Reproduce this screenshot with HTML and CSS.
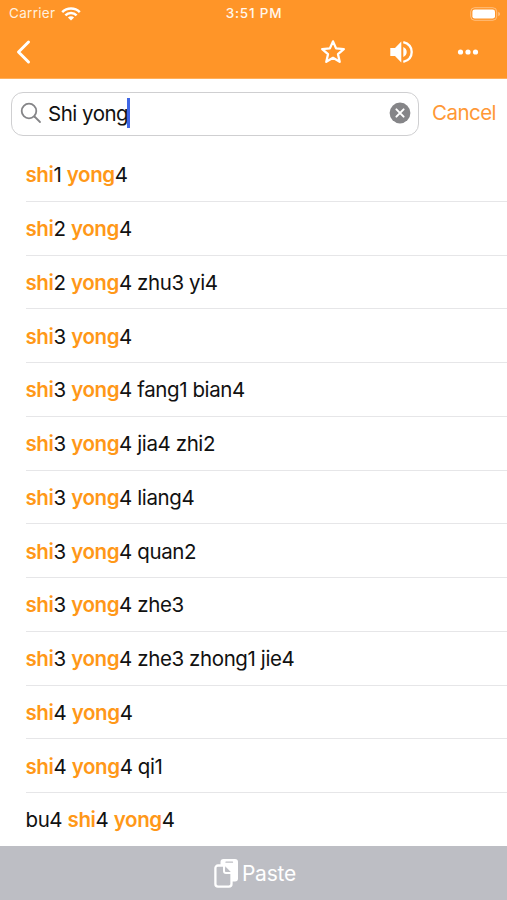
FILE: index.html
```html
<!DOCTYPE html>
<html lang="en">
<head>
<meta charset="utf-8">
<title>Search</title>
<link rel="stylesheet" href="styles.css">
</head>
<body>
<div class="app">
  <header class="header">
    <div class="status">
      <div class="carrier"><span>Carrier</span>
        <svg width="20" height="14" viewBox="0 0 20 14" fill="none" stroke="#fff" stroke-width="2.5"><path d="M1.2 5.2a12.4 12.4 0 0 1 17.6 0M4.4 8.3a7.9 7.9 0 0 1 11.2 0"/><path d="M10 13.6 6.9 10.5a4.4 4.4 0 0 1 6.2 0z" fill="#fff" stroke="none"/></svg>
      </div>
      <div class="time">3:51 PM</div>
      <svg class="battery" width="31" height="14" viewBox="0 0 31 14"><rect x=".7" y=".7" width="26" height="12.6" rx="4" fill="none" stroke="#fff" stroke-opacity=".4"/><rect x="2.4" y="2.4" width="22.6" height="9.2" rx="2.4" fill="#fff"/><path d="M28.3 4.8v4.4q1.7-.7 1.7-2.2t-1.7-2.2" fill="#fff" fill-opacity=".45"/></svg>
    </div>
    <div class="toolbar">
      <svg class="back" width="17" height="26" viewBox="0 0 17 26" fill="none" stroke="#fff" stroke-width="3" stroke-linecap="round" stroke-linejoin="round"><path d="M13.5 3 3.5 13l10 10"/></svg>
      <div class="actions">
        <svg width="26" height="26" viewBox="0 0 26 26" fill="none" stroke="#fff" stroke-width="2.3" stroke-linejoin="round"><path d="m13 2.4 3.1 7 7.7.7-5.8 5.1 1.7 7.6-6.7-4-6.7 4L8 15.2l-5.8-5.1 7.7-.7z"/></svg>
        <svg width="26" height="26" viewBox="0 0 26 26" fill="#fff"><path d="M2.3 9H7l6.300-6.500v21L7 17H2.300z"/><path d="M15.300 8q3.400 1.700 3.400 5T15.300 18z"/><path d="M15.300 3.100q8.400 2.200 8.400 9.900t-8.400 9.900" fill="none" stroke="#fff" stroke-width="2.300"/></svg>
        <svg width="26" height="26" viewBox="0 0 26 26" fill="#fff"><circle cx="5.5" cy="13" r="2.6"/><circle cx="13" cy="13" r="2.6"/><circle cx="20.5" cy="13" r="2.6"/></svg>
      </div>
    </div>
  </header>
  <div class="searchbar">
    <div class="field">
      <svg width="22" height="22" viewBox="0 0 22 22" fill="none" stroke="#858588" stroke-width="1.8" stroke-linecap="round"><circle cx="9" cy="9" r="7.3"/><path d="m14.5 14.5 5.5 5.5"/></svg>
      <span class="query">Shi yong</span><span class="caret"></span>
      <svg class="clear" width="22" height="22" viewBox="0 0 22 22"><circle cx="11" cy="11" r="10.4" fill="#858588"/><path d="m7.4 7.4 7.2 7.2m0-7.2-7.2 7.2" stroke="#fff" stroke-width="2" stroke-linecap="round"/></svg>
    </div>
    <span class="cancel">Cancel</span>
  </div>
  <ul class="list">
    <li><p><b>shi</b>1 <b>yong</b>4</p></li>
    <li><p><b>shi</b>2 <b>yong</b>4</p></li>
    <li><p><b>shi</b>2 <b>yong</b>4 zhu3 yi4</p></li>
    <li><p><b>shi</b>3 <b>yong</b>4</p></li>
    <li><p><b>shi</b>3 <b>yong</b>4 fang1 bian4</p></li>
    <li><p><b>shi</b>3 <b>yong</b>4 jia4 zhi2</p></li>
    <li><p><b>shi</b>3 <b>yong</b>4 liang4</p></li>
    <li><p><b>shi</b>3 <b>yong</b>4 quan2</p></li>
    <li><p><b>shi</b>3 <b>yong</b>4 zhe3</p></li>
    <li><p><b>shi</b>3 <b>yong</b>4 zhe3 zhong1 jie4</p></li>
    <li><p><b>shi</b>4 <b>yong</b>4</p></li>
    <li><p><b>shi</b>4 <b>yong</b>4 qi1</p></li>
    <li><p>bu4 <b>shi</b>4 <b>yong</b>4</p></li>
  </ul>
  <footer class="paste">
    <svg width="25" height="30" viewBox="0 0 25 30"><rect x="6.5" y="1" width="17.5" height="22.5" rx="3" fill="#fff"/><path d="M12 4.2h6.5" stroke="#bdbec4" stroke-width="1.3" stroke-linecap="round"/><path d="M4 7.5h6.500l7 7V26a2.600 2.600 0 0 1-2.600 2.600H4A2.600 2.600 0 0 1 1.400 26V10.100A2.600 2.600 0 0 1 4 7.500z" fill="#bdbec4" stroke="#fff" stroke-width="2.300"/><path d="M10 8v5q0 2 2 2h5.500" fill="none" stroke="#fff" stroke-width="2"/><path d="M11.200 8.300v4q0 1.600 1.600 1.600h4z" fill="#bdbec4"/></svg>
    <span>Paste</span>
  </footer>
</div>
</body>
</html>
```
FILE: styles.css
```css
* { box-sizing: border-box; }
body { margin: 0; background: #fff; font-family: Inter, "Liberation Sans", sans-serif; color: #111; }
svg { display: block; flex: none; }
.app { width: 507px; height: 900px; display: flex; flex-direction: column; overflow: hidden; }
.header { height: 79px; flex: none; background: #ff9528; border-bottom: 1px solid #ffb05c; }
.status { height: 27px; display: grid; grid-template-columns: 1fr auto 1fr; align-items: center; padding: 0 6px 0 7px; color: #fff; font-size: 13.5px; line-height: 27px; }
.carrier { display: flex; align-items: center; gap: 6px; letter-spacing: .3px; color: #fff0df; padding-left: 2px; }
.time { font-weight: 500; letter-spacing: .8px; color: #fff7ed; }
.battery { justify-self: end; }
.toolbar { height: 50px; display: flex; justify-content: space-between; align-items: center; padding: 0 26px 0 15px; }
.actions { display: flex; gap: 41.5px; }
.searchbar { height: 69px; flex: none; display: flex; align-items: center; padding: 0 11px 0 11px; justify-content: space-between; }
.field { width: 408px; height: 44px; border: 1px solid #cfcfd1; border-radius: 12px; display: flex; align-items: center; padding: 0 7px 1px 8px; }
.query { margin-left: 6px; font-size: 20.5px; letter-spacing: -.5px; white-space: nowrap; }
.caret { width: 2.5px; height: 30px; margin-left: -1px; background: #3f66e5; }
.clear { margin-left: auto; }
.cancel { color: #ff9835; font-size: 20.5px; letter-spacing: -.55px; padding-bottom: 2px; }
.list { list-style: none; margin: 0; padding: 0 0 0 25.5px; height: 698px; flex: none; }
.list li { height: 53.75px; border-bottom: 1px solid #e6e6e8; display: flex; align-items: center; }
.list p { margin: 0; padding-top: 1px; font-size: 20.5px; letter-spacing: -.4px; white-space: nowrap; }
.list b { font-weight: 600; color: #ff9818; }
.paste { flex: 1; background: #bdbec4; color: #fff; display: flex; align-items: center; justify-content: center; gap: 3px; padding-left: 3px; font-size: 21px; letter-spacing: -.2px; }
```
